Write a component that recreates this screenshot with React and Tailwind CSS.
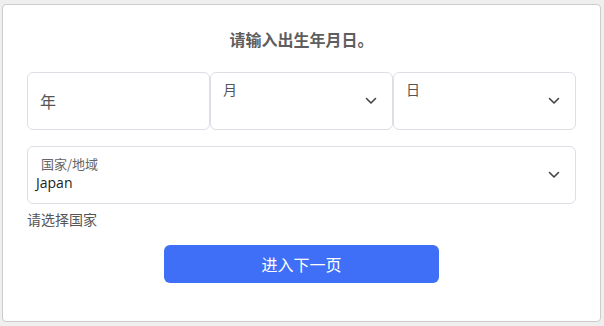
import React from "react";

const Chevron = () => (
  <svg width="12" height="8" viewBox="0 0 12 8" fill="none" className="shrink-0">
    <path d="M1.5 1.5 L6 6 L10.5 1.5" stroke="#444" strokeWidth="1.6" strokeLinecap="round" strokeLinejoin="round" />
  </svg>
);

const font = { fontFamily: '"Noto Sans CJK SC", "Noto Sans", sans-serif' };

export default function App() {
  return (
    <div className="w-[604px] h-[326px] bg-[#efefef] pt-[4px] pl-[2px]" style={font}>
      <div className="w-[599px] h-[318px] bg-white border border-[#cccccc] rounded-[4px] px-[24px] pt-[20px]">
        <div className="h-[28px] leading-[28px] text-center text-[16px] font-bold text-[#5e5e5e]">
          请输入出生年月日。
        </div>
        <div className="mt-[19px] grid grid-cols-3 gap-0">
          <div className="h-[58px] border border-[#dddfe5] rounded-[6px] flex items-center pl-[12px] text-[16px] text-[#555555]">
            年
          </div>
          <div className="h-[58px] border border-[#dddfe5] rounded-[6px] relative pl-[12px] pt-[6px] text-[14px] leading-[20px] text-[#555555]">
            月
            <div className="absolute right-[15px] top-[24px]"><Chevron /></div>
          </div>
          <div className="h-[58px] border border-[#dddfe5] rounded-[6px] relative pl-[12px] pt-[6px] text-[14px] leading-[20px] text-[#555555]">
            日
            <div className="absolute right-[15px] top-[24px]"><Chevron /></div>
          </div>
        </div>
        <div className="mt-[16px] h-[58px] border border-[#dddfe5] rounded-[6px] relative pl-[8px] pt-[8px]">
          <div className="pl-[5px] text-[13px] leading-[18px] text-[#666666]">国家/地域</div>
          <div className="text-[14px] leading-[20px] text-[#222222]" style={{ fontFamily: '"Open Sans", "Noto Sans CJK SC", sans-serif' }}>Japan</div>
          <div className="absolute right-[15px] top-[24px]"><Chevron /></div>
        </div>
        <div className="mt-[6px] text-[14px] leading-[18px] text-[#555555]">请选择国家</div>
        <div className="mt-[17px] flex justify-center">
          <button className="w-[275px] h-[38px] rounded-[6px] bg-[#3f6ff6] text-white text-[16px] leading-[38px]">
            进入下一页
          </button>
        </div>
      </div>
    </div>
  );
}
